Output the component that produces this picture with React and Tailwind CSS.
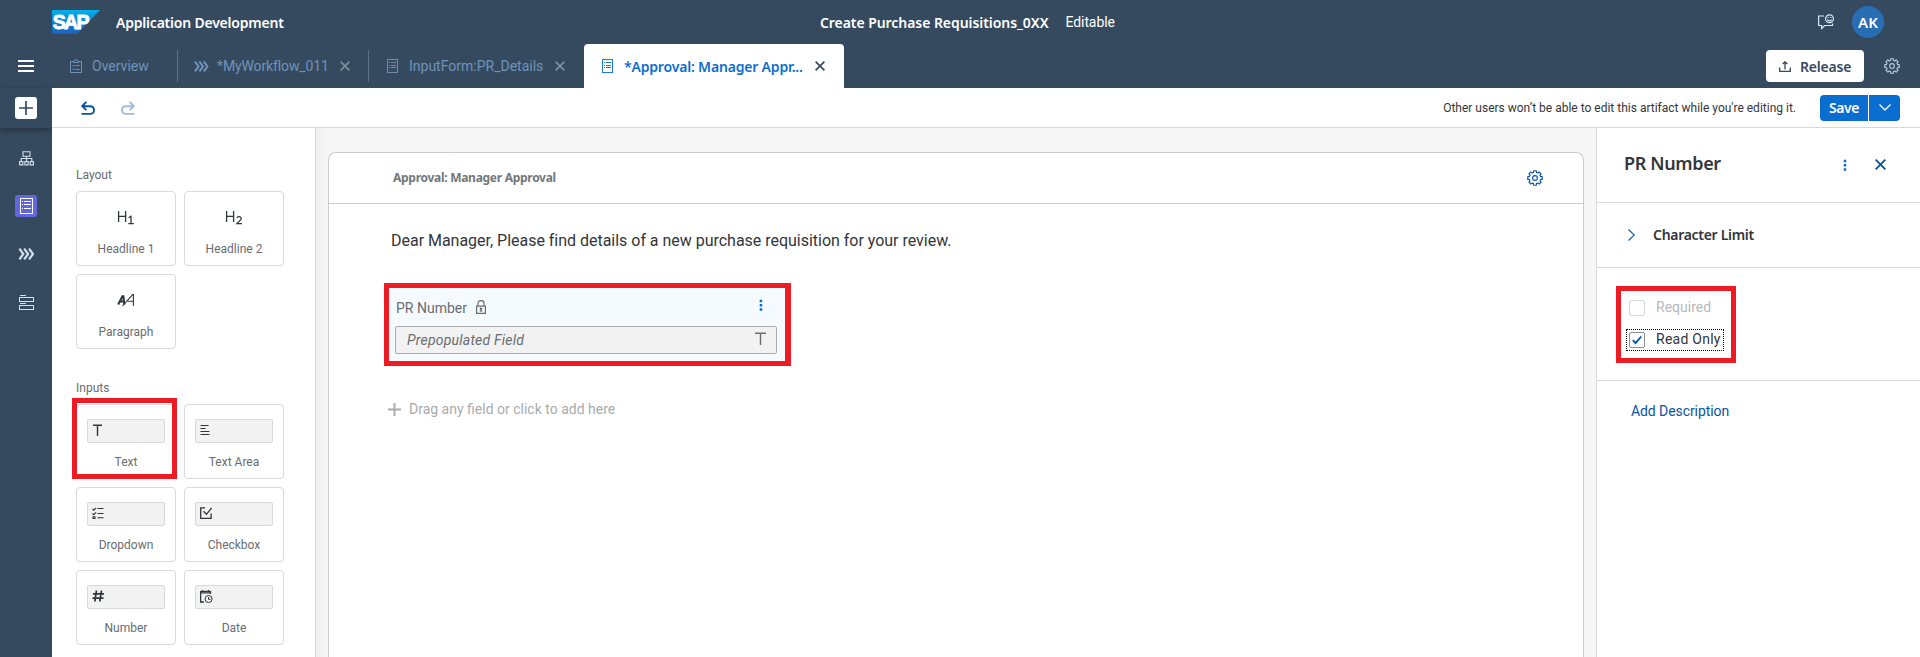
import React from "react";

const Close = ({ className }) => (
  <svg className={className} viewBox="0 0 10 10" fill="none" stroke="currentColor" strokeWidth="1.7">
    <path d="M0.6 0.6 9.4 9.4M9.4 0.6 0.6 9.4" />
  </svg>
);

const FormIcon = ({ className }) => (
  <svg className={className} viewBox="0 0 12 15" fill="none" stroke="currentColor" shapeRendering="crispEdges">
    <path d="M0.5 0.5h11v14h-11zM2 3.5h1M4 3.5h6M2 6.5h1M4 6.5h6M2 9.5h1M4 9.5h6" />
  </svg>
);

const Chevrons = ({ className }) => (
  <svg className={className} viewBox="0 0 16 12" fill="none" stroke="currentColor" strokeWidth="2.2">
    <path d="M0.9 0.6 4.8 6 0.9 11.4M5.7 0.6 9.600 6 5.7 11.4M10.500 0.6 14.500 6l-4 5.4" />
  </svg>
);

// Eight-toothed cog: each tooth is two inner and two outer points.
const gearPoints = Array.from({ length: 8 }, (_, i) =>
  [[-14, 5.8], [-11, 7.4], [11, 7.4], [14, 5.8]].map(([offset, r]) => {
    const a = ((i * 45 + offset) * Math.PI) / 180;
    return `${(8 + r * Math.sin(a)).toFixed(2)},${(8 - r * Math.cos(a)).toFixed(2)}`;
  }).join(" ")
).join(" ");

const Gear = ({ className }) => (
  <svg className={className} viewBox="0 0 16 16" fill="none" stroke="currentColor" strokeWidth="1.1" strokeLinejoin="round">
    <polygon points={gearPoints} />
    <circle cx="8" cy="8" r="2.400" />
  </svg>
);

const Dots = ({ className }) => (
  <svg className={className} viewBox="0 0 4 14" fill="currentColor">
    <path d="M0.600 0.900h2.700v2.700H0.600zM0.600 5.400h2.700v2.700H0.600zM0.600 9.900h2.700v2.700H0.600z" />
  </svg>
);

const Logo = () => (
  <svg className="h-6 w-12" viewBox="0 0 48 24">
    <defs>
      <linearGradient id="sap" x1="0" y1="0" x2="0" y2="1">
        <stop offset="0" stopColor="#00b1eb" />
        <stop offset="0.5" stopColor="#0d85d4" />
        <stop offset="1" stopColor="#1d61bc" />
      </linearGradient>
    </defs>
    <path d="M0 0h48L25 24H0z" fill="url(#sap)" />
    <text x="0.8" y="19.300" textLength="35" lengthAdjust="spacingAndGlyphs" fill="#fff" stroke="#fff" strokeWidth="0.9" fontFamily="Liberation Sans, sans-serif" fontWeight="700" fontSize="20" letterSpacing="-1.8">SAP</text>
  </svg>
);

const sem = "font-['Noto_Sans',sans-serif] font-semibold";

const HeadIcon = ({ n }) => (
  <svg className="h-4 w-[18px]" viewBox="0 0 18 16" fill="none" stroke="#32363a" strokeWidth="1.300">
    <path d="M1.600 1v11M8.600 1v11M1.600 6.300h7" />
    {n === 1 ? <path d="M11.500 7.800l2.500-1.500v7.300M11.300 13.600h5.500" /> : <path d="M11.800 7.900c.8-1.800 4.400-1.700 4.400.6 0 1.500-2.700 3-4.300 5.100h5.100" />}
  </svg>
);

const ParagraphIcon = () => (
  <svg className="h-4 w-[18px]" viewBox="0 0 18 16" fill="none" stroke="#32363a">
    <path d="M1.200 11.500 5.400 3.300h1l.9 8.200M3 8.500h4" strokeWidth="2.100" />
    <path d="M5.500 13 15.600 1.600h.800V13M10.600 8.300h5.800" strokeWidth="1.100" />
  </svg>
);

const fieldIcons = {
  Text: <path d="M1 1.200h9M5.500 1.200V12" strokeWidth="1.400" />,
  "Text Area": <path d="M0.500 1.500h8M0.500 4.500h5M0.500 7.500h9M0.500 10.500h9" strokeWidth="1.100" />,
  Dropdown: <path d="M0.500 2l1.200 1.200L4.200.8M0.500 6.500l1.200 1.200L4.200 5.300M1 9.800h2v1.700H1zM5.500 1.500h6M5.500 6.500h6M5.500 10.700h6" strokeWidth="1.100" />,
  Checkbox: <path d="M5 .8H0.700v10.600h10.400V6.500M3.500 4.300l3 3L11.600.9" strokeWidth="1.300" />,
  Number: <path d="M4.500.5 2.800 11.500M9.500.5 7.800 11.500M1 3.800h11M0.500 8.200h11" strokeWidth="1.700" />,
  Date: (
    <>
      <path d="M0.600 1v11H4M0.600 1.300h9.800M0.600 2.800h9.800M10.500 1v3" strokeWidth="1.300" />
      <circle cx="8.600" cy="9" r="3.500" />
      <path d="M8.500 7v2.300h2M2.500 0v2M8.500 0v2" />
    </>
  ),
};

const labelCls = "text-[12px] leading-4 text-[#6a6d70]";

const Tile = ({ label, children, tall }) => (
  <div className="flex h-[75px] w-[100px] flex-col items-center rounded-[4px] border border-[#d9d9d9] bg-white">
    <div className={tall ? "flex h-[49px] items-center pt-[2px]" : "flex h-[49px] items-start pt-[14px]"}>{children}</div>
    <span className={labelCls}>{label}</span>
  </div>
);

const InputTile = ({ label }) => (
  <Tile label={label}>
    <div className="h-6 w-[78px] rounded-[2px] border border-[#d9d9d9] bg-[#f2f2f2] pl-1 pt-[4px]">
      <svg className="h-[13px] w-[13px]" viewBox="0 0 13 13" fill="none" stroke="#32363a">{fieldIcons[label]}</svg>
    </div>
  </Tile>
);

const Header = () => (
  <header className="flex h-11 shrink-0 items-center text-[14px] text-white">
    <div className="flex w-[820px] items-center pl-[52px]">
      <Logo />
      <span className={`pl-4 tracking-[-0.21px] ${sem}`}>Application Development</span>
    </div>
    <span className={`tracking-[-0.06px] ${sem}`}>Create Purchase Requisitions_0XX</span>
    <span className="pl-[17px] tracking-[-0.1px]">Editable</span>
    <svg className="ml-auto mr-[18px] h-4 w-4" viewBox="0 0 16 16" fill="none" stroke="#d1e8ff" strokeWidth="1.200">
      <path d="M6 2H0.600v9.500h3v3l3-3H14.500V9.500" />
      <circle cx="11.500" cy="4.700" r="3.900" />
      <path d="M9.300 5.500c.8 1.800 3.600 1.800 4.400 0M9.600 3.500h1.200M12.200 3.500h1.200" />
    </svg>
    <div className={`mr-9 flex h-8 w-8 items-center justify-center rounded-full bg-[#286eb4] text-[15px] ${sem}`}>AK</div>
  </header>
);

const Tabs = () => (
  <nav className="flex h-11 shrink-0 items-center text-[14px] text-[#7093bb]">
    <div className="flex w-[52px] justify-center">
      <svg className="h-3 w-4" viewBox="0 0 16 12" fill="#fff"><path d="M0 0h16v2H0zM0 5h16v2H0zM0 10h16v2H0z" /></svg>
    </div>
    <div className="flex h-8 w-[126px] items-center border-r border-[#5f7182] pl-[18px]">
      <svg className="h-[14px] w-3" viewBox="0 0 12 14" fill="none" stroke="currentColor">
        <path d="M3 2.500H0.500v11h11v-11H9M3.500 3.500V2l2.500-1.500L8.500 2v1.500zM2.500 6.500l1 1 1-1.500M5.500 6.500h4M2.500 10l1 1 1-1.500M5.500 10.500h4" />
      </svg>
      <span className="pl-[10px]">Overview</span>
    </div>
    <div className="flex h-8 w-[191px] items-center border-r border-[#5f7182] pl-4">
      <Chevrons className="h-[11px] w-[15px]" />
      <span className="w-[131px] pl-2 tracking-[-0.12px]">*MyWorkflow_011</span>
      <Close className="h-[10px] w-[10px] text-[#7f8f9b]" />
    </div>
    <div className="flex h-8 w-[215px] items-center pl-[18px]">
      <FormIcon className="h-[14px] w-[11px]" />
      <span className="w-[157px] pl-[11px]">InputForm:PR_Details</span>
      <Close className="h-[10px] w-[10px] text-[#7f8f9b]" />
    </div>
    <div className="flex h-11 w-[260px] items-center rounded-t-[4px] bg-white pl-[18px] text-[#0a6ed1]">
      <FormIcon className="h-[14px] w-[11px]" />
      <span className={`w-[202px] pl-[11px] tracking-[-0.18px] ${sem}`}>*Approval: Manager Appr...</span>
      <Close className="h-[10px] w-[10px] text-[#354a5f]" />
    </div>
    <div className="ml-auto mr-5 flex h-8 w-[98px] items-center rounded-[4px] bg-white pl-[13px] text-[#354a5f]">
      <svg className="h-[11px] w-3" viewBox="0 0 12 11" fill="none" stroke="currentColor" strokeWidth="1.300">
        <path d="M0.700 6.500v3.800h10.600V6.500M6 8.500V1M3.700 3 6 .8 8.300 3" />
      </svg>
      <span className={`pl-[9px] tracking-[-0.2px] ${sem}`}>Release</span>
    </div>
    <Gear className="mr-5 h-4 w-4 text-[#b4cbe2]" />
  </nav>
);

const Rail = () => (
  <aside className="flex w-[52px] shrink-0 flex-col bg-[#354a5f] text-[#d1e0ee]">
    <div className="flex h-10 items-start justify-center pt-[9px] shadow-[0_2px_6px_rgba(0,0,0,0.35)]">
      <div className="flex h-[22px] w-[22px] items-center justify-center rounded-[3px] bg-white">
        <svg className="h-[14px] w-[14px]" viewBox="0 0 14 14" stroke="#354a5f" strokeWidth="1.700"><path d="M7 0v14M0 7h14" /></svg>
      </div>
    </div>
    <div className="flex flex-col items-center gap-[26px] pt-[19px]">
      <div className="flex h-[22px] items-center">
        <svg className="h-[15px] w-[15px]" viewBox="0 0 15 15" fill="none" stroke="currentColor" strokeWidth="1.100">
          <path d="M4 .8h7v4.400H4zM7.500 5.200V10M2.200 10V7.500h10.600V10M.6 10.600h3.300v3.300H.6zM5.850 10.600h3.300v3.300h-3.300zM11.100 10.600h3.300v3.300h-3.300z" />
        </svg>
      </div>
      <div className="flex h-[22px] w-[22px] items-center justify-center rounded-[3px] bg-[#6367de] text-white">
        <FormIcon className="h-4 w-[13px]" />
      </div>
      <div className="flex h-[22px] items-center"><Chevrons className="h-3 w-[17px]" /></div>
      <div className="flex h-[22px] items-center">
        <svg className="h-[15px] w-[15px]" viewBox="0 0 15 15" fill="none" stroke="currentColor" shapeRendering="crispEdges">
          <path d="M0.500 0.500h6M0.500 2.500h14v4h-14zM0.500 8.500h6M0.500 10.500h14v4h-14z" />
        </svg>
      </div>
    </div>
  </aside>
);

const Toolbar = () => (
  <div className="flex h-10 shrink-0 items-center border-b border-[#d9d9d9] pl-[29px] pr-5">
    <svg className="h-[14px] w-[14px] text-[#0854a0]" viewBox="0 0 14 14" fill="none" stroke="currentColor" strokeWidth="1.900">
      <path d="M0.500 12.900H9c2.500 0 4-1.500 4-3.700S11.500 5.300 9 5.300H1.500M5.300 0.800 1.300 5.100l4 4" />
    </svg>
    <svg className="ml-[26px] h-[14px] w-[14px] text-[#9fbddb]" viewBox="0 0 14 14" fill="none" stroke="currentColor" strokeWidth="1.900">
      <path d="M13.500 12.900H5c-2.500 0-4-1.500-4-3.700S2.500 5.300 5 5.300h7.500M8.700 0.800l4 4.300-4 4" />
    </svg>
    <span className="ml-auto text-[12px] text-[#32363a]">Other users won’t be able to edit this artifact while you're editing it.</span>
    <div className="ml-6 flex h-[26px] gap-px text-white">
      <button className={`w-12 rounded-l-[4px] bg-[#0a6ed1] text-[14px] tracking-[-0.4px] ${sem}`}>Save</button>
      <button className="flex w-[31px] items-center justify-center rounded-r-[4px] bg-[#0a6ed1]">
        <svg className="h-[7px] w-3" viewBox="0 0 12 7" fill="none" stroke="currentColor" strokeWidth="1.300"><path d="M.5.500 6 6 11.500.500" /></svg>
      </button>
    </div>
  </div>
);

const Palette = () => (
  <section className="w-[264px] shrink-0 border-r border-[#d9d9d9] bg-white pl-6 pt-[39px]">
    <h3 className={labelCls}>Layout</h3>
    <div className="mt-2 grid w-[208px] grid-cols-2 gap-2">
      <Tile label="Headline 1" tall><HeadIcon n={1} /></Tile>
      <Tile label="Headline 2" tall><HeadIcon n={2} /></Tile>
      <Tile label="Paragraph" tall><ParagraphIcon /></Tile>
    </div>
    <h3 className={`mt-[31px] ${labelCls}`}>Inputs</h3>
    <div className="mt-2 grid w-[208px] grid-cols-2 gap-2">
      <div className="relative">
        <InputTile label="Text" />
        <div className="absolute -left-1 -top-[6px] h-[81px] w-[105px] border-[5px] border-[#ed1c24]" />
      </div>
      {["Text Area", "Dropdown", "Checkbox", "Number", "Date"].map((l) => <InputTile key={l} label={l} />)}
    </div>
  </section>
);

const Canvas = () => (
  <main className="min-w-0 flex-1 bg-gradient-to-r from-[#eeeff1] from-0% to-[#f7f7f7] to-[14px] pl-3 pr-3 pt-6">
    <div className="h-full rounded-t-[8px] border border-b-0 border-[#cccccc] bg-white">
      <div className="flex h-[51px] items-center border-b border-[#cccccc] pl-16 pr-10">
        <span className="font-['Noto_Sans',sans-serif] text-[12px] font-bold tracking-[-0.28px] text-[#74777a]">Approval: Manager Approval</span>
        <Gear className="ml-auto h-4 w-4 text-[#0854a0]" />
      </div>
      <p className="pl-[62px] pt-[25px] text-[16px] leading-6 tracking-[-0.02px] text-[#32363a]">Dear Manager, Please find details of a new purchase requisition for your review.</p>
      <div className="ml-[55px] mt-[30px] h-[83px] w-[407px] border-[5px] border-[#ed1c24]">
        <div className="h-full border-r border-[#0a6ed1] bg-[#f5faff] pl-[6px] pr-2">
          <div className="flex h-[38px] items-center pt-[2px] text-[14px] text-[#6a6d70]">
            <span className="pl-[1px]">PR Number</span>
            <svg className="mb-[2px] ml-[9px] h-[14px] w-[10px]" viewBox="0 0 10 14" fill="none" stroke="currentColor" strokeWidth="1.200">
              <path d="M.6 6.100h8.800v7.300H.6zM2 6V3.500C2-.4 8-.4 8 3.500V6" />
              <path d="M4 8h2v1.200H4zM4.700 9.300h.6v1.800h-.6zM3.500 11.200h3" strokeWidth=".7" fill="currentColor" />
            </svg>
            <Dots className="mb-[6px] ml-auto mr-[14px] h-[13px] w-[4px] text-[#0a6ed1]" />
          </div>
          <div className="flex h-7 items-center rounded-[2px] border border-[#a9acae] bg-[#f2f2f2] pl-[11px] pr-[10px] text-[14px] text-[#6a6d70]">
            <span className="italic tracking-[0.22px]">Prepopulated Field</span>
            <svg className="mb-[3px] ml-auto h-[13px] w-[11px]" viewBox="0 0 11 13" fill="none" stroke="currentColor" strokeWidth="1.400"><path d="M0 1.200h11M5.500 1.200V13" /></svg>
          </div>
        </div>
      </div>
      <div className="flex items-center pl-[59px] pt-[33px] text-[14px] leading-5 text-[#a9abad]">
        <svg className="h-[13px] w-[13px]" viewBox="0 0 13 13" stroke="currentColor" strokeWidth="2"><path d="M6.500 0v13M0 6.500h13" /></svg>
        <span className="pl-2">Drag any field or click to add here</span>
      </div>
    </div>
  </main>
);

const Details = () => (
  <section className="w-[324px] shrink-0 border-l border-[#d9d9d9] bg-white text-[14px] text-[#32363a]">
    <div className="flex h-[75px] items-center border-b border-[#d9d9d9] pb-[2px] pl-[27px] pr-[34px]">
      <h2 className={`pb-[2px] text-[18px] tracking-[-0.35px] ${sem}`}>PR Number</h2>
      <Dots className="ml-auto mr-[28px] mt-[3px] h-[13px] w-[4px] text-[#0a6ed1]" />
      <Close className="h-[11px] w-[11px] text-[#0854a0]" />
    </div>
    <div className="flex h-[65px] items-center border-b border-[#d9d9d9] pl-[31px]">
      <svg className="h-3 w-[7px]" viewBox="0 0 7 12" fill="none" stroke="#0854a0" strokeWidth="1.100"><path d="M.5.500 6.300 6 .5 11.500" /></svg>
      <span className={`pb-px pl-[18px] tracking-[-0.3px] ${sem}`}>Character Limit</span>
    </div>
    <div className="h-[113px] border-b border-[#d9d9d9] pl-[19px] pt-[18px]">
      <div className="h-[77px] w-[120px] border-[5px] border-[#ed1c24] pl-[5px] pt-[5px]">
        <div className="flex h-6 items-center pl-[3px] text-[#b7b9bb]">
          <div className="h-4 w-4 rounded-[2px] border border-[#d5d9dd]" />
          <span className="pb-px pl-[11px]">Required</span>
        </div>
        <div className="mt-[9px] flex h-[22px] w-[98px] items-center border border-dotted border-black pl-[2px]">
          <div className="flex h-4 w-4 items-center justify-center rounded-[2px] border border-[#89919a]">
            <svg className="h-[10px] w-[10px]" viewBox="0 0 10 10" fill="none" stroke="#0854a0" strokeWidth="1.900"><path d="M.8 5.200 3.600 8 9.200 1.500" /></svg>
          </div>
          <span className="whitespace-nowrap pb-px pl-[11px] tracking-[0.25px]">Read Only</span>
        </div>
      </div>
    </div>
    <div className="pl-[34px] pt-5 leading-5 tracking-[-0.08px] text-[#0854a0]">Add Description</div>
  </section>
);

export default function App() {
  return (
    <div className="flex h-[657px] w-[1920px] flex-col overflow-hidden bg-[#354a5f] font-['Roboto',sans-serif]">
      <Header />
      <Tabs />
      <div className="flex min-h-0 flex-1">
        <Rail />
        <div className="flex min-w-0 flex-1 flex-col bg-white">
          <Toolbar />
          <div className="flex min-h-0 flex-1">
            <Palette />
            <Canvas />
            <Details />
          </div>
        </div>
      </div>
    </div>
  );
}
